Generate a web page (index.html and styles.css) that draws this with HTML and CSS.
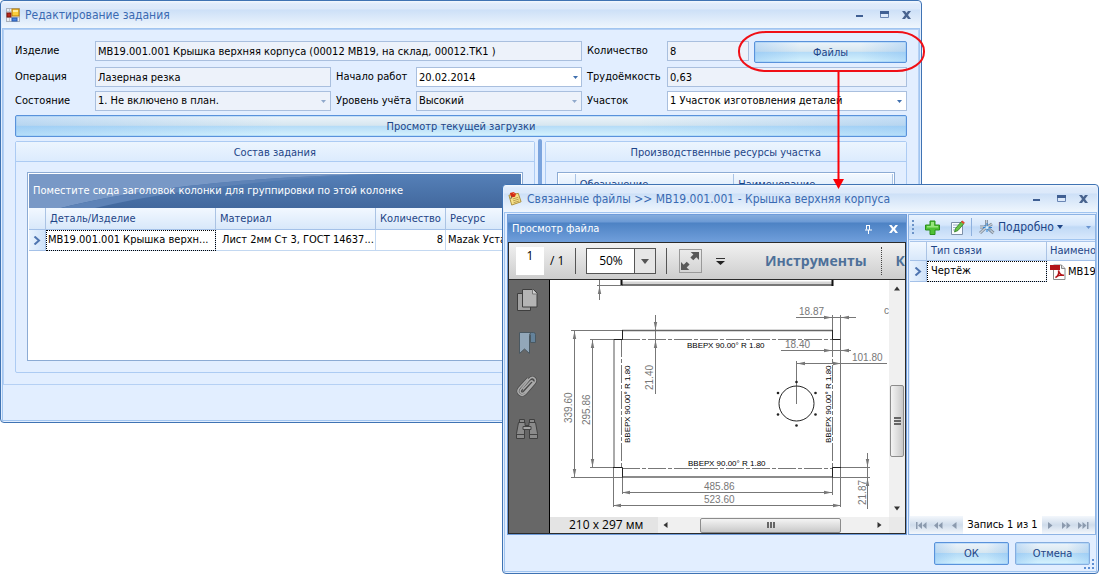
FILE: index.html
```html
<!DOCTYPE html>
<html lang="ru">
<head>
<meta charset="utf-8">
<title>Редактирование задания</title>
<link rel="stylesheet" href="styles.css">
</head>
<body>
<main class="desktop">

<section class="window window-task" aria-labelledby="task-title">
  <header class="titlebar">
    <svg class="title-icon" width="14" height="14" viewBox="0 0 14 14" aria-hidden="true">
      <rect x=".5" y=".5" width="13" height="13" fill="#e8ecf2" stroke="#a9b0ba"/>
      <path d="M3.5 1v12M1 9.5h12M1 3.500h4" stroke="#bcc4cf"/>
      <rect x="1" y="5" width="4" height="4" fill="#b8271b" stroke="#7d160e"/>
      <rect x="6" y="1" width="7" height="7" fill="#fbcf3c" stroke="#b47a08"/>
      <path d="M7 2h5v2H7z" fill="#ffeb9c"/>
      <rect x="6" y="10" width="5" height="3" fill="#4d86e0" stroke="#2458b0"/>
    </svg>
    <h1 class="title" id="task-title">Редактирование задания</h1>
    <div class="win-controls">
      <button class="win-btn" type="button" aria-label="Свернуть"><svg width="11" height="10" viewBox="0 0 11 10"><path d="M2 5h7v2H2z" fill="#3f5f93"/></svg></button>
      <button class="win-btn" type="button" aria-label="Развернуть"><svg width="11" height="10" viewBox="0 0 11 10"><path d="M1.500 1.500h8v6h-8z" fill="#dce9fa" stroke="#6a86b4"/><path d="M1 1h9v3H1z" fill="#3f5f93"/></svg></button>
      <button class="win-btn" type="button" aria-label="Закрыть"><svg width="11" height="10" viewBox="0 0 11 10"><path d="M1 1h3l1.500 2L7 1h3L7 5l3 4H7L5.500 7 4 9H1l3-4z" fill="#49648f"/></svg></button>
    </div>
  </header>
  <div class="client">
    <div class="page">
      <form class="fields">
        <label for="product">Изделие</label>
        <input class="field readonly span-3" id="product" value="МВ19.001.001 Крышка верхняя корпуса (00012 МВ19, на склад, 00012.ТК1 )" readonly>
        <label for="qty">Количество</label>
        <div class="qty-files">
          <input class="field readonly" id="qty" value="8" readonly>
          <div class="files-wrap">
            <button class="button" type="button">Файлы</button>
            <svg class="callout" width="190" height="162" viewBox="0 0 190 162" aria-hidden="true">
              <rect x="2" y="2" width="185" height="39" rx="27" ry="19" fill="none" stroke="#f00f16" stroke-width="2"/>
              <path d="M101.500 42v110" stroke="#fb0007" stroke-width="2"/>
              <path d="M96 149h11l-5.500 10z" fill="#fb0007"/>
            </svg>
          </div>
        </div>

        <label for="operation">Операция</label>
        <input class="field readonly" id="operation" value="Лазерная резка" readonly>
        <label for="start">Начало работ</label>
        <div class="combo">
          <input class="field" id="start" value="20.02.2014">
          <button class="combo-arrow" type="button" aria-label="Выбрать дату"><svg width="5" height="3" viewBox="0 0 5 3"><path d="M0 0h5L2.500 3z" fill="#3f6fae"/></svg></button>
        </div>
        <label for="labor">Трудоёмкость</label>
        <input class="field readonly" id="labor" value="0,63" readonly>

        <label for="state">Состояние</label>
        <div class="combo">
          <select class="field readonly" id="state"><option>1. Не включено в план.</option></select>
          <svg class="select-arrow" width="5" height="3" viewBox="0 0 5 3" aria-hidden="true"><path d="M0 0h5L2.500 3z" fill="#90a9cb"/></svg>
        </div>
        <label for="level">Уровень учёта</label>
        <div class="combo">
          <select class="field readonly" id="level"><option>Высокий</option></select>
          <svg class="select-arrow" width="5" height="3" viewBox="0 0 5 3" aria-hidden="true"><path d="M0 0h5L2.500 3z" fill="#90a9cb"/></svg>
        </div>
        <label for="area">Участок</label>
        <div class="combo">
          <select class="field" id="area"><option>1 Участок изготовления деталей</option></select>
          <svg class="select-arrow" width="5" height="3" viewBox="0 0 5 3" aria-hidden="true"><path d="M0 0h5L2.500 3z" fill="#3f6fae"/></svg>
        </div>
      </form>

      <button class="button button-wide" type="button">Просмотр текущей загрузки</button>

      <div class="split">
        <section class="group group-left">
          <h2 class="group-title">Состав задания</h2>
          <div class="group-body">
            <div class="grid grid-main">
              <div class="group-bar">
                <svg class="group-bar-bg" viewBox="0 0 492 34" preserveAspectRatio="none" aria-hidden="true">
                  <path d="M0 0h350C220 3 110 14 32 34H0z" fill="#7898c6"/>
                  <path d="M32 34C110 14 220 3 350 0h-20C250 6 150 14 66 34z" fill="#5e83b7"/>
                </svg>
                <span class="group-bar-text">Поместите сюда заголовок колонки для группировки по этой колонке</span>
              </div>
              <table class="table">
                <colgroup><col class="c-mark"><col class="c-part"><col class="c-material"><col class="c-qty"><col></colgroup>
                <thead><tr><th></th><th>Деталь/Изделие</th><th>Материал</th><th>Количество</th><th>Ресурс</th></tr></thead>
                <tbody><tr>
                  <td class="mark"><svg width="8" height="9" viewBox="0 0 8 9" aria-label="Текущая строка"><path d="M1.500.500l4.500 4-4.500 4" fill="none" stroke="#4f75b0" stroke-width="2"/></svg></td>
                  <td class="focus">МВ19.001.001 Крышка верхн...</td>
                  <td class="pad">Лист 2мм Ст 3, ГОСТ 14637...</td>
                  <td class="num">8</td>
                  <td>Mazak Уста</td>
                </tr></tbody>
              </table>
            </div>
          </div>
        </section>
        <div class="splitter"></div>
        <section class="group group-right">
          <h2 class="group-title">Производственные ресурсы участка</h2>
          <div class="group-body">
            <div class="grid grid-main">
              <table class="table">
                <colgroup><col class="c-mark"><col><col></colgroup>
                <thead><tr><th></th><th>Обозначение</th><th>Наименование</th></tr></thead>
              </table>
            </div>
          </div>
        </section>
      </div>
    </div>
  </div>
</section>

<section class="window window-files" aria-labelledby="files-title">
  <header class="titlebar">
    <svg class="title-icon" width="14" height="15" viewBox="0 0 15 15" aria-hidden="true">
      <path d="M1 4l10-2 3 9-10 3.500z" fill="#f7e38c" stroke="#a98a35"/>
      <path d="M5 8l6-1.700M5.500 10l6-1.800M6 12l6-1.900" stroke="#b79a4a"/>
      <path d="M2 1.500l4-1 2.500 2-1 3-4 .8z" fill="#d32a12"/>
      <path d="M4 5l-1 3" stroke="#5b5b5b"/>
      <path d="M5 1.500l2 1" stroke="#ff8a5c"/>
    </svg>
    <h1 class="title" id="files-title">Связанные файлы &gt;&gt; МВ19.001.001 - Крышка верхняя корпуса</h1>
    <div class="win-controls">
      <button class="win-btn" type="button" aria-label="Свернуть"><svg width="11" height="10" viewBox="0 0 11 10"><path d="M2 5h7v2H2z" fill="#3f5f93"/></svg></button>
      <button class="win-btn" type="button" aria-label="Развернуть"><svg width="11" height="10" viewBox="0 0 11 10"><path d="M1.500 1.500h8v6h-8z" fill="#dce9fa" stroke="#6a86b4"/><path d="M1 1h9v3H1z" fill="#3f5f93"/></svg></button>
      <button class="win-btn" type="button" aria-label="Закрыть"><svg width="11" height="10" viewBox="0 0 11 10"><path d="M1 1h3l1.500 2L7 1h3L7 5l3 4H7L5.500 7 4 9H1l3-4z" fill="#49648f"/></svg></button>
    </div>
  </header>
  <div class="client">
    <div class="files-body">
      <section class="dock">
        <header class="dock-caption">
          <h2 class="dock-title">Просмотр файла</h2>
          <button class="win-btn" type="button" aria-label="Закрепить"><svg width="9" height="10" viewBox="0 0 9 10"><path d="M2.500 1v4.500M2 1.500h4M5.500 1v5M1 6h7M4.500 6v4" fill="none" stroke="#fff"/></svg></button>
          <button class="win-btn" type="button" aria-label="Закрыть просмотр"><svg width="9" height="8" viewBox="0 0 9 8"><path d="M0 0h2.500l2 2.500 2-2.500H9L6 4l3 4H6.500l-2-2.500-2 2.500H0l3-4z" fill="#fff"/></svg></button>
        </header>
        <div class="pdf">
          <div class="pdf-toolbar">
            <input class="pdf-page" aria-label="Страница" value="1">
            <span class="pdf-total">/ 1</span>
            <span class="pdf-sep"></span>
            <div class="combo pdf-zoom">
              <select class="pdf-zoom-select" aria-label="Масштаб"><option>50%</option></select>
              <svg class="pdf-zoom-arrow" width="8" height="5" viewBox="0 0 8 5" aria-hidden="true"><path d="M0 0h8L4 5z" fill="#555"/></svg>
            </div>
            <span class="pdf-sep"></span>
            <button class="pdf-full" type="button" aria-label="Полный экран"><svg width="20" height="20" viewBox="0 0 20 20"><path d="M19 1v8l-2.700-2.700-3 3-2.900-2.900 3-3L10.700 1zM1 19v-8l2.700 2.700 3-3 2.900 2.900-3 3L9.300 19z" fill="#5a5a5a"/></svg></button>
            <button class="pdf-more" type="button" aria-label="Ещё"><svg width="9" height="7" viewBox="0 0 9 7"><path d="M0 .500h9" stroke="#333"/><path d="M0 3h9L4.500 7z" fill="#222"/></svg></button>
            <button class="pdf-tools" type="button">Инструменты</button>
            <span class="pdf-dots"></span>
            <button class="pdf-tools pdf-cut" type="button">К</button>
          </div>
          <div class="pdf-main">
            <nav class="pdf-nav" aria-label="Панели навигации">
              <button class="nav-btn" type="button" aria-label="Миниатюры страниц"><svg width="22" height="24" viewBox="0 0 22 24"><path d="M1.500 5.500h13v17h-13z" fill="#a2a2a2" stroke="#3e3e3e"/><path d="M6.500 1.500h11l3.500 3.500v14h-14.500z" fill="#b4b4b4" stroke="#3e3e3e"/><path d="M16.500 1.500v4.500H21" fill="#d0d0d0" stroke="#777"/></svg></button>
              <button class="nav-btn" type="button" aria-label="Закладки"><svg width="20" height="24" viewBox="0 0 20 24"><path d="M10.500 1.500h6q2 0 2 2v8h-5V4z" fill="#64829a" stroke="#4a5861"/><path d="M2.500 1.500h12q-2 .5-2 3v18l-5-4.500-5 4.500z" fill="#92a7b9" stroke="#4a5861"/></svg></button>
              <button class="nav-btn" type="button" aria-label="Вложения"><svg width="22" height="24" viewBox="0 0 22 24"><path d="M7 15.500l7.500-8c1.500-1.600 3.500.3 2.200 1.800L8.500 18.200c-2.800 2.800-6-.3-3.500-3L13.500 5c3.500-3.600 8 .4 4.800 4.200L9.500 19.500c-4 4.300-10-.8-6.200-5.500L12 4.500" fill="none" stroke="#484848" stroke-width="3"/><path d="M7 15.500l7.500-8c1.500-1.600 3.500.3 2.200 1.800L8.500 18.200c-2.800 2.800-6-.3-3.500-3L13.500 5c3.500-3.600 8 .4 4.800 4.200L9.500 19.500c-4 4.300-10-.8-6.200-5.500L12 4.500" fill="none" stroke="#aaa" stroke-width="1.600"/></svg></button>
              <button class="nav-btn" type="button" aria-label="Поиск"><svg width="24" height="22" viewBox="0 0 24 22"><path d="M4.500 1.500h5v3h-5zM14.500 1.500h5v3h-5zM3.500 4.500h6.500v3h4v-3h6.500l2 11v5h-8v-9h-5v9h-8v-5z" fill="#8b8b8b" stroke="#404040"/><path d="M1.500 16.500h8M14.500 16.500h8" stroke="#444"/><path d="M8 8.500h8v3H8z" fill="#a5a5a5" stroke="#444"/></svg></button>
            </nav>
            <div class="pdf-view">
              <svg class="drawing" viewBox="550 280 339 237" preserveAspectRatio="xMinYMin meet" role="img" aria-label="Чертёж крышки">
                <defs>
                  <path id="arrow" d="M0 0l-8 1.700v-3.400z"/>
                </defs>
                <path d="M622 283h211" stroke="#d5d5d5" stroke-width="3"/>
                <path d="M622 285h211" stroke="#777" stroke-width="2"/>
                <path d="M621.500 280v5.500M832.500 280v6" stroke="#111" stroke-width="2"/>
                <g fill="none" stroke="#777" stroke-width="1">
                  <path d="M597 285.500h25M599.500 280v20"/>
                  <path d="M571 330.500h51M571 477.500h51M590 339.500h32M590 467.500h32"/>
                  <path d="M574.500 330v147M592.500 339v128"/>
                  <path d="M613.500 467v40M622.500 477v17M832.500 477v18M840.500 315v192M832.500 315v15"/>
                  <path d="M655.500 315v79M622 492.500h210M613 505.500h228"/>
                  <path d="M796 317.500h60M781 350.500h70M797 363.500h90M796.500 361v43"/>
                  <path d="M832 467.500h38M832 477.500h38M867.500 453v56"/>
                </g>
                <g fill="none" stroke="#777" stroke-dasharray="18 2 4 2">
                  <path d="M622 339.500h210M622 468.500h210M621.500 339v128M832.500 339v128"/>
                </g>
                <path d="M622 330.500h211M622 477h211" stroke="#666" stroke-width="1.500"/>
                <path d="M614 339v128" stroke="#aaa" stroke-width="2"/>
                <path d="M622.500 330v9.500h-9M832.500 330v9.500h8M613 467.500h9.500v10M841 467.500h-8.500v10" fill="none" stroke="#222"/>
                <g fill="#777">
                  <use href="#arrow" transform="translate(599.5 286) rotate(-90)"/>
                  <use href="#arrow" transform="translate(574.5 331) rotate(-90)"/>
                  <use href="#arrow" transform="translate(574.5 477) rotate(90)"/>
                  <use href="#arrow" transform="translate(592.5 340) rotate(-90)"/>
                  <use href="#arrow" transform="translate(592.5 467) rotate(90)"/>
                  <use href="#arrow" transform="translate(655.5 330) rotate(90)"/>
                  <use href="#arrow" transform="translate(655.5 340) rotate(-90)"/>
                  <use href="#arrow" transform="translate(867.5 467) rotate(90)"/>
                  <use href="#arrow" transform="translate(867.5 478) rotate(-90)"/>
                  <use href="#arrow" transform="translate(832 317.5)"/>
                  <use href="#arrow" transform="translate(841 317.5) rotate(180)"/>
                  <use href="#arrow" transform="translate(832 350.5)"/>
                  <use href="#arrow" transform="translate(841 350.5) rotate(180)"/>
                  <use href="#arrow" transform="translate(797 363.5) rotate(180)"/>
                  <use href="#arrow" transform="translate(841 363.5)"/>
                  <use href="#arrow" transform="translate(622 492.5) rotate(180)"/>
                  <use href="#arrow" transform="translate(832 492.5)"/>
                  <use href="#arrow" transform="translate(613 505.5) rotate(180)"/>
                  <use href="#arrow" transform="translate(841 505.5)"/>
                </g>
                <circle cx="796.500" cy="403.500" r="17.500" fill="none" stroke="#222"/>
                <g fill="#222">
                  <circle cx="796.500" cy="382" r="1.300"/><circle cx="815.500" cy="393" r="1.300"/><circle cx="815.500" cy="414.500" r="1.300"/>
                  <circle cx="796.500" cy="425.500" r="1.300"/><circle cx="778" cy="393" r="1.300"/><circle cx="778" cy="414.500" r="1.300"/>
                </g>
                <g class="dim">
                  <text x="799" y="315">18.87</text>
                  <text x="785" y="348">18.40</text>
                  <text x="852" y="361">101.80</text>
                  <text x="704" y="490">485.86</text>
                  <text x="704" y="503">523.60</text>
                  <text x="884" y="314">с</text>
                  <text transform="translate(572 423) rotate(-90)">339.60</text>
                  <text transform="translate(590 425) rotate(-90)">295.86</text>
                  <text transform="translate(653 390) rotate(-90)">21.40</text>
                  <text transform="translate(866 505) rotate(-90)">21.87</text>
                </g>
                <g class="bend">
                  <text x="687" y="348">ВВЕРХ  90.00° R 1.80</text>
                  <text x="688" y="466">ВВЕРХ  90.00° R 1.80</text>
                  <text transform="translate(630 443) rotate(-90)">ВВЕРХ  90.00° R 1.80</text>
                  <text transform="translate(831 443) rotate(-90)">ВВЕРХ  90.00° R 1.80</text>
                </g>
              </svg>
              <div class="vscroll">
                <svg width="8" height="5" viewBox="0 0 8 5" aria-hidden="true"><path d="M1 4.500l3-4 3 4z" fill="#333"/></svg>
                <div class="vthumb"><i></i><i></i><i></i></div>
                <svg width="8" height="5" viewBox="0 0 8 5" aria-hidden="true"><path d="M1 .500l3 4 3-4z" fill="#333"/></svg>
              </div>
              <div class="pdf-status">
                <span class="pdf-size">210 x 297 мм</span>
                <div class="hscroll">
                  <svg width="5" height="8" viewBox="0 0 5 8" aria-hidden="true"><path d="M4.500 1l-4 3 4 3z" fill="#333"/></svg>
                  <div class="hthumb"><i></i><i></i><i></i></div>
                  <svg width="5" height="8" viewBox="0 0 5 8" aria-hidden="true"><path d="M.5 1l4 3-4 3z" fill="#333"/></svg>
                </div>
                <div class="corner"></div>
              </div>
            </div>
          </div>
        </div>
      </section>

      <section class="links">
        <div class="toolbar">
          <span class="grip"></span>
          <button class="tool" type="button" aria-label="Добавить"><svg width="15" height="15" viewBox="0 0 15 15"><path d="M5 1h5v4h4.500v5H10v4.500H5V10H.5V5H5z" fill="#4fc235" stroke="#2c8f1d"/><path d="M6 2h3v4H6zM2 6h11v1.500H2z" fill="#97e57d"/></svg></button>
          <button class="tool" type="button" aria-label="Изменить"><svg width="15" height="15" viewBox="0 0 15 15"><path d="M1.500 2.500h11v12h-11z" fill="#fafcff" stroke="#7d90a8"/><path d="M3 5h6M3 7.500h5M3 10h3" stroke="#9aaec8"/><path d="M4.500 12l1-3.500 6-7 2.500 2-6 7z" fill="#67c244" stroke="#2f7a22" stroke-width=".8"/><path d="M11 2l1.200-1.500 2.600 2L13.500 4z" fill="#e5452f"/></svg></button>
          <span class="tool-sep"></span>
          <button class="tool tool-text" type="button"><svg width="16" height="16" viewBox="0 0 16 16" aria-hidden="true"><path d="M7.500 1v7M7.500 8L1 14M7.500 8l7 6M1 8h6M8 8l5-3" stroke="#7f8b99" stroke-width="3"/><path d="M7.500 1v7M7.500 8L1 14M7.500 8l7 6M1 8h6M8 8l5-3" stroke="#c5ced8" stroke-width="1.400"/><path d="M8 4v9M4 8.500h9M5.500 6l5.500 5.500" stroke="#2e83d4"/><circle cx="8" cy="8.500" r="1.500" fill="#d3efff"/></svg>Подробно<svg width="6" height="4" viewBox="0 0 6 4" aria-hidden="true"><path d="M0 0h6L3 4z" fill="#1e4587"/></svg></button>
          <button class="tool tool-more" type="button" aria-label="Настройка панели"><svg width="5" height="3" viewBox="0 0 5 3"><path d="M0 0h5L2.500 3z" fill="#6a94d0"/></svg></button>
        </div>
        <div class="grid grid-links">
          <table class="table">
            <colgroup><col class="c-mark"><col class="c-type"><col></colgroup>
            <thead><tr><th></th><th>Тип связи</th><th class="name">Наимено</th></tr></thead>
            <tbody><tr>
              <td class="mark"><svg width="8" height="9" viewBox="0 0 8 9" aria-label="Текущая строка"><path d="M1.500.500l4.500 4-4.500 4" fill="none" stroke="#4f75b0" stroke-width="2"/></svg></td>
              <td class="focus type">Чертёж</td>
              <td class="file"><span class="file-cell"><svg width="16" height="16" viewBox="0 0 16 16" aria-hidden="true"><path d="M3.500 1h8l3.500 3.500v11H3.500z" fill="#fff" stroke="#8a8a8a"/><path d="M11.500 1v3.500H15" fill="#ddd" stroke="#8a8a8a"/><path d="M0 1h10v5H0z" fill="#b3161b"/><path d="M5.500 13.500c2-1 3.500-4 3-7 1 3.500 2.700 5 5.500 4.700-3-.7-6 0-8.500 2.300z" fill="none" stroke="#b3161b" stroke-width="1.400"/></svg>МВ19</span></td>
            </tr></tbody>
          </table>
          <div class="navigator">
            <button class="nav-step" type="button" aria-label="Первая запись"><svg width="11" height="7" viewBox="0 0 11 7"><path d="M0 0h1.500v7H0zM6 0v7L2 3.500zM10.500 0v7l-4-3.500z"/></svg></button>
            <button class="nav-step" type="button" aria-label="Предыдущая страница"><svg width="9" height="7" viewBox="0 0 9 7"><path d="M4 0v7L0 3.500zM8.500 0v7l-4-3.500z"/></svg></button>
            <button class="nav-step" type="button" aria-label="Предыдущая запись"><svg width="5" height="7" viewBox="0 0 5 7"><path d="M4.500 0v7L0 3.500z"/></svg></button>
            <span class="nav-text">Запись 1 из 1</span>
            <button class="nav-step" type="button" aria-label="Следующая запись"><svg width="5" height="7" viewBox="0 0 5 7"><path d="M0 0v7l4.500-3.500z"/></svg></button>
            <button class="nav-step" type="button" aria-label="Следующая страница"><svg width="9" height="7" viewBox="0 0 9 7"><path d="M0 0v7l4-3.500zM4.500 0v7l4-3.500z"/></svg></button>
            <button class="nav-step" type="button" aria-label="Последняя запись"><svg width="11" height="7" viewBox="0 0 11 7"><path d="M0 0v7l4-3.500zM4.500 0v7l4-3.500zM9 0h1.500v7H9z"/></svg></button>
          </div>
        </div>
      </section>
    </div>
    <footer class="dialog-buttons">
      <button class="button button-default" type="button">ОК</button>
      <button class="button button-cancel" type="button">Отмена</button>
      <svg class="size-grip" width="10" height="10" viewBox="0 0 10 10" aria-hidden="true"><path d="M8 0h2v2H8zM8 4h2v2H8zM8 8h2v2H8zM4 8h2v2H4zM0 8h2v2H0z" fill="#5d8fd4"/></svg>
    </footer>
  </div>
</section>

</main>
</body>
</html>
```
FILE: styles.css
```css
* { box-sizing: border-box; }

body {
  margin: 0;
  background: #fff;
  color: #000;
  font: 11px/14px "DejaVu Sans Condensed", "DejaVu Sans", sans-serif;
}

button, input, select {
  margin: 0;
  font: inherit;
  color: inherit;
  border-radius: 0;
}

button {
  padding: 0;
  border: 0;
  background: none;
}

svg { display: block; flex: none; }

.desktop {
  position: relative;
  min-height: 576px;
}

/* Windows */
.window {
  position: absolute;
  padding: 0 1px 1px;
  border: 1px solid #3f73b3;
  border-radius: 4px;
  background: #e2eeff;
}

.window-task { top: 0; left: 0; right: 179px; }
.window-files { top: 184px; left: 502px; right: 2px; z-index: 1; }

.titlebar {
  display: flex;
  align-items: center;
  height: 27px;
  padding: 0 4px;
  gap: 5px;
  background: linear-gradient(#f3f8fe, #dfebfb 3px, #dce9fa 8px, #cde0f7 9px, #eff6fd);
  border-radius: 3px 3px 0 0;
}

.title {
  flex: 1;
  margin: 0;
  font-size: 12px;
  font-weight: normal;
  line-height: 16px;
  color: #3a6ab2;
  white-space: nowrap;
}

.win-controls { display: flex; }

.win-btn {
  display: grid;
  place-items: center;
  width: 25px;
  height: 20px;
}

.win-controls .win-btn:last-child { width: 19px; }

.client { border: 1px solid #a1c5f0; }

.page {
  margin-bottom: 35px;
  padding: 11px;
  border: 1px solid #b5d0f4;
}

/* Form */
.fields {
  display: grid;
  grid-template-columns: 75px 236fr 75px 166fr 75px 240fr;
  gap: 4px 5px;
}

.fields label { line-height: 20px; white-space: nowrap; }
.span-3 { grid-column: span 3; }

.field {
  width: 100%;
  min-width: 0;
  height: 20px;
  padding: 0 2px;
  border: 1px solid #a9bfde;
  background: #fff;
  appearance: none;
  outline: 0;
}

.readonly { background: #edf2fa; }

.combo { position: relative; }

.combo-arrow {
  position: absolute;
  top: 1px;
  right: 1px;
  display: grid;
  place-items: center;
  width: 12px;
  height: 18px;
}

.select-arrow {
  position: absolute;
  top: 9px;
  right: 5px;
  pointer-events: none;
}

.qty-files {
  display: grid;
  grid-template-columns: 82fr 153fr;
  gap: 5px;
}

.files-wrap { position: relative; }

.callout {
  position: absolute;
  top: -11px;
  left: -17px;
  z-index: 2;
  pointer-events: none;
}

.button {
  display: block;
  width: 100%;
  height: 22px;
  padding-top: 1px;
  border: 1px solid #5992db;
  border-radius: 2px;
  background:
    linear-gradient(90deg, rgba(110, 175, 240, .3), transparent 30%, transparent 70%, rgba(110, 175, 240, .3)),
    linear-gradient(#edf4fa, #d6e6f0 47%, #b4dbf7 50%, #d6f3fd);
  box-shadow: inset 0 0 0 1px rgba(140, 195, 245, .4);
  color: #1e4587;
  text-align: center;
}

.button-wide { margin: 4px 0 2px; }

/* Groups */
.split {
  display: flex;
  gap: 3px;
}

.group {
  min-width: 0;
  margin-top: 2px;
  border: 1px solid #accbf3;
  border-radius: 2px;
}

.group-left { flex: 520 1 0; }
.group-right { flex: 362 1 0; }

.splitter {
  width: 4px;
  background: #7ba4dd;
  border-radius: 2px 2px 0 0;
}

.group-title {
  margin: 0;
  padding: 3px 0 1px;
  border-bottom: 1px solid #accbf3;
  background: linear-gradient(#ecf5fe, #dcebfd);
  color: #1e4587;
  font-size: 11px;
  font-weight: normal;
  line-height: 15px;
  text-align: center;
}

.group-body { padding: 10px 11px 11px; }

.grid {
  border: 1px solid #8cabd4;
  background: #fff;
}

.grid-main {
  min-height: 189px;
  padding: 1px;
}

.group-bar {
  position: relative;
  height: 34px;
  padding: 10px 4px;
  background: linear-gradient(#5580b8, #42689d);
}

.group-bar-bg {
  position: absolute;
  inset: 0;
  width: 100%;
  height: 100%;
}

.group-bar-text {
  position: relative;
  color: #fff;
  white-space: nowrap;
}

.table {
  width: 100%;
  border-collapse: separate;
  border-spacing: 0;
  table-layout: fixed;
}

.c-mark { width: 17px; }
.c-part { width: 170px; }
.c-material { width: 160px; }
.c-qty { width: 70px; }
.c-type { width: 120px; }

.table th {
  height: 22px;
  padding: 0 4px;
  border-right: 1px solid #aac3e4;
  border-bottom: 1px solid #a4c1e8;
  background: linear-gradient(#f2f8ff, #d8e8fa);
  color: #1e4587;
  font-weight: normal;
  text-align: left;
  white-space: nowrap;
  overflow: hidden;
}

.table td {
  height: 21px;
  padding: 0 2px;
  border-right: 1px solid #c3d8f1;
  border-bottom: 1px solid #c3d8f1;
  white-space: nowrap;
  overflow: hidden;
}

.table td.mark {
  padding: 0 4px;
  border-color: #a4c1e8;
  background: linear-gradient(90deg, #e9f3fe, #cfe2f9);
}

.table td.focus { outline: 1px dotted #000; outline-offset: -1px; }
.table td.pad { padding-left: 6px; }
.table td.num { text-align: right; }

/* Linked files window */
.files-body {
  display: flex;
  gap: 1px;
  padding: 1px 0 0 2px;
}

.dock {
  display: flex;
  flex-direction: column;
  flex: 1;
  min-width: 0;
  border: 1px solid #6f9cda;
}

.dock-caption {
  display: flex;
  align-items: center;
  height: 27px;
  padding: 0 0 0 4px;
  background: linear-gradient(#85addd, #6c9ad5 7px, #4d82c4 8px, #709fdb);
}

.dock-title {
  flex: 1;
  margin: 0;
  color: #fff;
  font-size: 11px;
  font-weight: normal;
}

.pdf {
  flex: 1;
  border: 1px solid #2b2b2b;
  border-top: 0;
}

.pdf-toolbar {
  display: flex;
  align-items: center;
  height: 38px;
  padding-left: 7px;
  border-top: 1px solid #2b2b2b;
  border-bottom: 1px solid #2b2b2b;
  background: linear-gradient(#f1f1f1, #cdcdcd);
  font: 12px/16px "Open Sans", "Noto Sans", sans-serif;
  overflow: hidden;
}

.pdf-page {
  width: 28px;
  height: 28px;
  padding: 0 0 12px;
  border: 0;
  background: #fff;
  text-align: center;
}

.pdf-total { margin-left: 6px; width: 26px; }

.pdf-sep {
  width: 1px;
  height: 26px;
  background: #555;
}

.pdf-zoom { width: 72px; margin: 0 10px; }

.pdf-zoom-select {
  display: block;
  width: 100%;
  height: 26px;
  padding: 0 12px;
  border: 1px solid #555;
  background: linear-gradient(90deg, #fff 47px, #555 47px, #555 48px, #e6e6e6 48px);
  appearance: none;
}

.pdf-zoom-arrow {
  position: absolute;
  top: 11px;
  right: 7px;
  pointer-events: none;
}

.pdf-full {
  display: grid;
  place-items: center;
  width: 24px;
  height: 24px;
  margin: 0 14px 0 12px;
  border: 1px solid #999;
}

.pdf-tools {
  flex: none;
  margin-left: 40px;
  color: #4d7099;
  font: bold 14px/20px "Open Sans", "Noto Sans", sans-serif;
}

.pdf-dots {
  height: 28px;
  margin-left: 14px;
  border-left: 1px dotted #444;
}

.pdf-toolbar .pdf-cut { margin-left: 14px; }

.pdf-main { display: flex; }

.pdf-nav {
  display: flex;
  flex-direction: column;
  align-items: center;
  gap: 19px;
  width: 41px;
  padding-top: 8px;
  padding-right: 4px;
  border-right: 1px solid #000;
  background: #676767;
}

.nav-btn { display: grid; place-items: center; height: 24px; }

.pdf-view {
  display: grid;
  grid-template-columns: 1fr 16px;
  flex: 1;
  min-width: 0;
  background: #fff;
}

.drawing { width: 100%; height: 237px; }
.dim { fill: #777; font: 10px "Liberation Sans", sans-serif; }
.bend { fill: #000; font: 8px "Liberation Sans", sans-serif; }

.vscroll {
  display: flex;
  flex-direction: column;
  align-items: center;
  justify-content: space-between;
  padding: 6px 0;
  background: #f0f0f0;
}

.vthumb, .hthumb {
  display: flex;
  align-items: center;
  justify-content: center;
  gap: 1px;
  border: 1px solid #8c8c8c;
  border-radius: 2px;
}

.vthumb {
  flex-direction: column;
  width: 14px;
  height: 72px;
  margin-top: 60px;
  margin-bottom: 15px;
  background: linear-gradient(90deg, #f4f4f4, #c9c9c9);
}

.vthumb i { width: 7px; height: 2px; background: #666; }

.pdf-status {
  display: flex;
  grid-column: 1 / -1;
  height: 16px;
  background: #f0f0f0;
}

.pdf-size {
  width: 108px;
  padding-left: 19px;
  background: #e4e4e4;
  font: 12px/16px "Open Sans", "Noto Sans", sans-serif;
}

.hscroll {
  display: flex;
  flex: 1;
  align-items: center;
  justify-content: space-between;
  padding: 0 7px 0 5px;
}

.hthumb {
  width: 141px;
  height: 15px;
  margin-right: 4px;
  background: linear-gradient(#f4f4f4, #c9c9c9);
}

.hthumb i { width: 2px; height: 6px; background: #666; }
.corner { width: 16px; background: #e9e9e9; }

.links {
  display: flex;
  flex-direction: column;
  width: 188px;
  border: 1px solid #8db3e4;
}

.toolbar {
  display: flex;
  align-items: center;
  height: 25px;
  padding-left: 3px;
  background: linear-gradient(#e9f3fe, #d5e6fb 10px, #c0d9f6 12px, #d8e8fc);
  border-bottom: 1px solid #a1c5f0;
}

.grip {
  width: 2px;
  height: 14px;
  margin-right: 8px;
  background: repeating-linear-gradient(#6c93c8 0 2px, transparent 2px 4px);
}

.tool {
  display: grid;
  place-items: center;
  width: 20px;
  height: 22px;
}

.tool + .tool { margin-left: 5px; }

.tool-sep {
  width: 1px;
  height: 18px;
  margin: 0 7px 0 4px;
  background: #8eb0de;
}

.tool-text {
  display: flex;
  align-items: center;
  gap: 3px;
  width: auto;
  color: #1e4587;
  font-size: 12px;
}

.toolbar .tool-more { width: 12px; margin: 0 1px 0 auto; }

.grid-links {
  display: flex;
  flex: 1;
  flex-direction: column;
  justify-content: space-between;
  margin: 1px 0 0 1px;
  border-color: #a9c5ea;
  border-width: 1px 0 0;
}

.grid-links th { height: 19px; }
.grid-links th:last-child, .grid-links td:last-child { border-right: 0; }
.table th.name { padding: 0 0 0 3px; }
.table td.type { padding-left: 4px; }
.table td.file { padding: 0 0 0 3px; border-bottom: 0; }
.file-cell { display: flex; align-items: center; gap: 2px; }

.navigator {
  display: flex;
  align-items: center;
  height: 18px;
  padding: 0 3px;
  background: linear-gradient(#f3f7fc, #cfdceb 50%, #f3f7fc);
}

.nav-step {
  display: grid;
  place-items: center;
  flex: 1;
  height: 16px;
  fill: #8b9aae;
}

.nav-text {
  padding: 2px 4px;
  background: #fff;
  white-space: nowrap;
}

.dialog-buttons {
  position: relative;
  display: flex;
  justify-content: flex-end;
  gap: 6px;
  padding: 7px 6px 6px;
}

.dialog-buttons .button { width: 75px; height: 23px; }
.dialog-buttons .button-cancel { border-color: #85addf; }

.size-grip {
  position: absolute;
  right: 2px;
  bottom: 2px;
}
```
